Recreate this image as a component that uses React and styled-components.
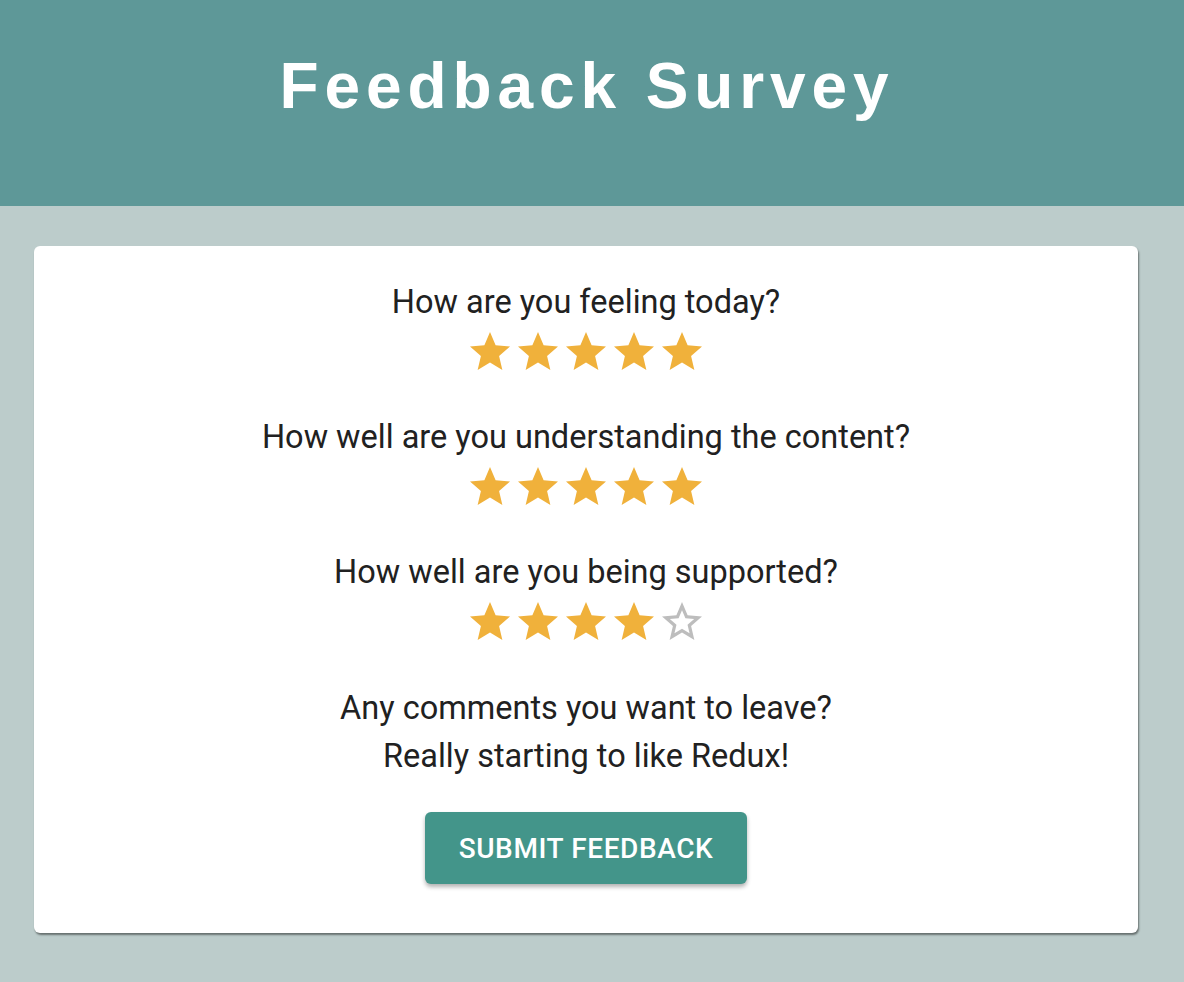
import React, { useState } from 'react';
import styled, { createGlobalStyle } from 'styled-components';

const GlobalStyle = createGlobalStyle`
    html, body {
        margin: 0;
        padding: 0;
        background: #bccccb;
    }
`;

const STAR = 'M12 17.27L18.18 21l-1.64-7.03L22 9.24l-7.19-.61L12 2 9.19 8.63 2 9.24l5.46 4.73L5.82 21z';
const STAR_BORDER =
    'M22 9.24l-7.19-.62L12 2 9.19 8.63 2 9.24l5.46 4.73L5.82 21 12 17.27 18.18 21l-1.63-7.03L22 9.24zM12 15.4l-3.76 2.27 1-4.28-3.32-2.88 4.38-.38L12 6.1l1.71 4.04 4.38.38-3.32 2.88 1 4.28L12 15.4z';

function Rating({ value }) {
    return (
        <Stars>
            {[1, 2, 3, 4, 5].map((n) => (
                <StarIcon key={n} viewBox="0 0 24 24" $filled={n <= value}>
                    <path d={n <= value ? STAR : STAR_BORDER} />
                </StarIcon>
            ))}
        </Stars>
    );
}

const questions = [
    { text: 'How are you feeling today?', value: 5 },
    { text: 'How well are you understanding the content?', value: 5 },
    { text: 'How well are you being supported?', value: 4 },
];

export default function App() {
    const [comment] = useState('Really starting to like Redux!');

    return (
        <Page>
            <GlobalStyle />
            <Header>
                <Title>Feedback Survey</Title>
            </Header>
            <Main>
                <Card>
                    {questions.map((q) => (
                        <Question key={q.text}>
                            <Label>{q.text}</Label>
                            <Rating value={q.value} />
                        </Question>
                    ))}
                    <Comments>
                        <Label>Any comments you want to leave?</Label>
                        <Label>{comment}</Label>
                    </Comments>
                    <SubmitButton>Submit Feedback</SubmitButton>
                </Card>
            </Main>
        </Page>
    );
}

const Page = styled.div`
    min-height: 100vh;
    background: #bccccb;
    font-family: Roboto, 'Noto Sans', sans-serif;
`;

const Header = styled.header`
    height: 206px;
    box-sizing: border-box;
    padding: 49px 10px 0 0;
    background: #5e9898;
    text-align: center;
`;

const Title = styled.h1`
    margin: 0;
    font-family: 'Liberation Sans', Arial, sans-serif;
    font-size: 64px;
    line-height: 74px;
    font-weight: 700;
    letter-spacing: 5.9px;
    color: #ffffff;
`;

const Main = styled.main`
    padding: 40px 46px 50px 34px;
`;

const Card = styled.section`
    display: flex;
    flex-direction: column;
    align-items: center;
    padding: 38px 0 49px;
    background: #ffffff;
    border-radius: 6px;
    box-shadow: 1px 2px 2px rgba(0, 0, 0, 0.45);
`;

const Question = styled.div`
    display: flex;
    flex-direction: column;
    align-items: center;
    gap: 8px;
    margin-bottom: 43px;
`;

const Label = styled.div`
    font-size: 32.5px;
    line-height: 36px;
    color: #212121;
`;

const Stars = styled.div`
    display: flex;
    height: 48px;
    align-items: center;
`;

const StarIcon = styled.svg`
    width: 48px;
    height: 48px;
    fill: ${({ $filled }) => ($filled ? '#f0b13b' : '#bdbdbd')};
`;

const Comments = styled.div`
    display: flex;
    flex-direction: column;
    align-items: center;
    gap: 12px;
    margin-top: 1px;
`;

const SubmitButton = styled.button`
    margin-top: 38px;
    width: 322px;
    height: 72px;
    border: none;
    border-radius: 6px;
    background: #43958a;
    color: #ffffff;
    font-family: Roboto, sans-serif;
    font-size: 28px;
    font-weight: 500;
    text-transform: uppercase;
    letter-spacing: 0.6px;
    box-shadow: 0 3px 4px rgba(0, 0, 0, 0.3);
    cursor: pointer;
`;
